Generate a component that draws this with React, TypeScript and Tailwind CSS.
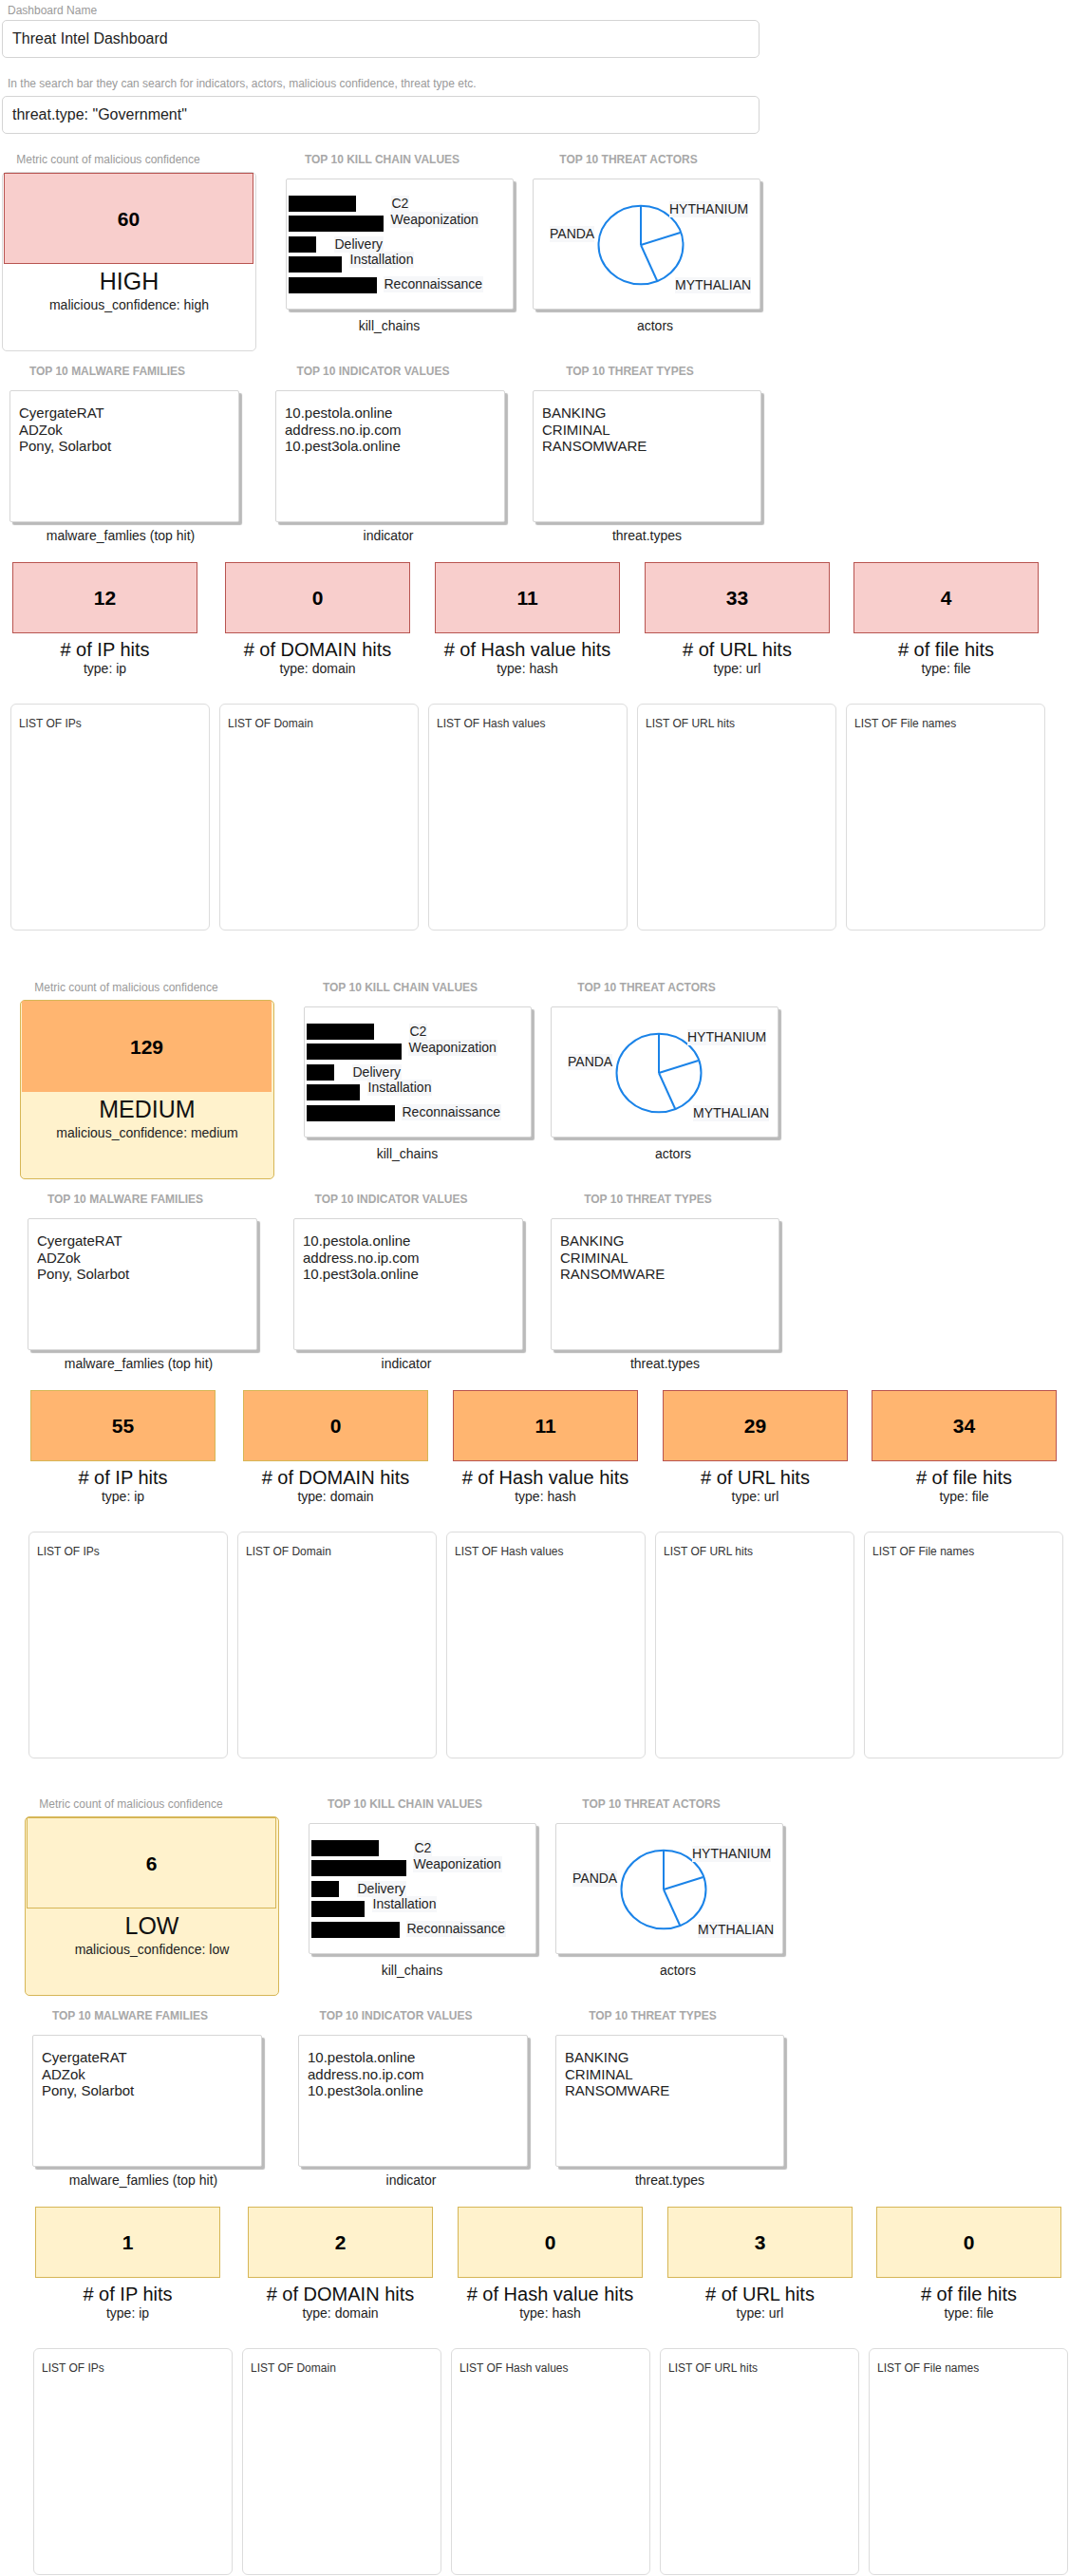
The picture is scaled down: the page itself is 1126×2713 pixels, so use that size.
import React from "react";

type CountItem = { v: string; cls: string };

interface SectionCfg {
  offset: string;
  mt: string;
  card: string;
  inner: string;
  value: string;
  level: string;
  sub: string;
  counts: CountItem[];
}

const KILL = [
  { w: 71, label: "C2", cls: "ml-[37px]" },
  { w: 100, label: "Weaponization", cls: "ml-[7px] -translate-y-[4px]" },
  { w: 29, label: "Delivery", cls: "ml-[19px]" },
  { w: 56, label: "Installation", cls: "ml-[8px] -translate-y-[5px]" },
  { w: 93, label: "Reconnaissance", cls: "ml-[7px] -translate-y-[1px]" },
];

const COUNT_LABELS = [
  ["# of IP hits", "type: ip"],
  ["# of DOMAIN hits", "type: domain"],
  ["# of Hash value hits", "type: hash"],
  ["# of URL hits", "type: url"],
  ["# of file hits", "type: file"],
];
const COUNT_ML = ["ml-[13px]", "ml-[29px]", "ml-[26px]", "ml-[26px]", "ml-[25px]"];
const LISTS = [
  "LIST OF IPs",
  "LIST OF Domain",
  "LIST OF Hash values",
  "LIST OF URL hits",
  "LIST OF File names",
];

const PINK = "bg-[#f8cecc] border-[#b85450]";
const ORANGE_Y = "bg-[#ffb570] border-[#d6b656]";
const ORANGE_R = "bg-[#ffb570] border-[#b85450]";
const YELLOW = "bg-[#fff2cc] border-[#d6b656]";

const SECTIONS: SectionCfg[] = [
  {
    offset: "pl-0",
    mt: "mt-[20px]",
    card: "border-[#d9d9d9] bg-white",
    inner: "bg-[#f8cecc] border-[#b85450]",
    value: "60",
    level: "HIGH",
    sub: "malicious_confidence: high",
    counts: [
      { v: "12", cls: PINK },
      { v: "0", cls: PINK },
      { v: "11", cls: PINK },
      { v: "33", cls: PINK },
      { v: "4", cls: PINK },
    ],
  },
  {
    offset: "pl-[19px]",
    mt: "mt-[53px]",
    card: "border-[#d6b656] bg-[#fff2cc]",
    inner: "bg-[#ffb570] border-[#ffb570]",
    value: "129",
    level: "MEDIUM",
    sub: "malicious_confidence: medium",
    counts: [
      { v: "55", cls: ORANGE_Y },
      { v: "0", cls: ORANGE_Y },
      { v: "11", cls: ORANGE_R },
      { v: "29", cls: ORANGE_R },
      { v: "34", cls: ORANGE_R },
    ],
  },
  {
    offset: "pl-[24px]",
    mt: "mt-[41px]",
    card: "border-[#d6b656] bg-[#fff2cc]",
    inner: "bg-[#fff2cc] border-[#d6b656]",
    value: "6",
    level: "LOW",
    sub: "malicious_confidence: low",
    counts: [
      { v: "1", cls: YELLOW },
      { v: "2", cls: YELLOW },
      { v: "0", cls: YELLOW },
      { v: "3", cls: YELLOW },
      { v: "0", cls: YELLOW },
    ],
  },
];

function Title({ children, pr = "pr-[36px]" }: { children: React.ReactNode; pr?: string }) {
  return (
    <div
      className={`h-[14px] whitespace-nowrap text-center text-[12px] font-bold leading-[14px] text-[#a8a8a8] ${pr}`}
    >
      {children}
    </div>
  );
}

const SHADOW_CARD =
  "border border-[#d6d6d6] bg-white rounded-[2px] shadow-[3px_3px_1px_rgba(0,0,0,0.27)]";

function KillChainCard() {
  return (
    <div className={`${SHADOW_CARD} h-[138px] w-[240px] pl-[1.5px] pt-[16.5px]`}>
      <div className="flex flex-col gap-[4.5px]">
        {KILL.map((k) => (
          <div key={k.label} className="flex h-[17px] items-center">
            <div className="h-[17px] bg-black" style={{ width: k.w }} />
            <span
              className={`whitespace-nowrap bg-[#f6f7f9] px-[1px] text-[14px] leading-[17px] text-[#222] ${k.cls}`}
            >
              {k.label}
            </span>
          </div>
        ))}
      </div>
    </div>
  );
}

function ActorsCard() {
  return (
    <div className={`${SHADOW_CARD} relative h-[138px] w-[240px]`}>
      <svg className="absolute left-0 top-0" width="238" height="136" viewBox="0 0 238 136">
        <ellipse cx="113" cy="69" rx="44.5" ry="41.3" fill="none" stroke="#1a83e8" strokeWidth="2" />
        <line x1="113" y1="69" x2="113" y2="27.7" stroke="#1a83e8" strokeWidth="2" />
        <line x1="113" y1="69" x2="154.5" y2="56" stroke="#1a83e8" strokeWidth="2" />
        <line x1="113" y1="69" x2="130.5" y2="107.5" stroke="#1a83e8" strokeWidth="2" />
      </svg>
      <span className="absolute left-[17px] top-[48.5px] bg-[#f6f7f9] text-[14px] leading-[17px] text-[#222]">
        PANDA
      </span>
      <span className="absolute left-[143px] top-[22.5px] bg-[#f6f7f9] text-[14px] leading-[17px] text-[#222]">
        HYTHANIUM
      </span>
      <span className="absolute left-[149px] top-[102.5px] bg-[#f6f7f9] text-[14px] leading-[17px] text-[#222]">
        MYTHALIAN
      </span>
    </div>
  );
}

function ListCard({ lines }: { lines: string[] }) {
  return (
    <div className={`${SHADOW_CARD} h-[139px] w-full pl-[9px] pt-[14px] text-[15px] leading-[17.5px] text-[#222]`}>
      {lines.map((l) => (
        <div key={l}>{l}</div>
      ))}
    </div>
  );
}

function Caption({ children, cls = "" }: { children: React.ReactNode; cls?: string }) {
  return (
    <div className={`whitespace-nowrap text-center text-[14px] leading-[17px] text-[#222] ${cls}`}>
      {children}
    </div>
  );
}

function Section({ cfg }: { cfg: SectionCfg }) {
  return (
    <div className={`${cfg.offset} ${cfg.mt}`}>
      {/* Row A */}
      <div className="flex h-[223px] items-start">
        <div className="ml-[2px] w-[268px]">
          <div className="h-[14px] whitespace-nowrap pr-[44px] text-center text-[12px] leading-[14px] text-[#9a9a9a]">
            Metric count of malicious confidence
          </div>
          <div className={`mt-[6px] h-[189px] rounded-[5px] border ${cfg.card}`}>
            <div
              className={`ml-[1px] mr-[2px] flex h-[96px] items-center justify-center border pt-[2px] text-[21px] font-bold text-black ${cfg.inner}`}
            >
              {cfg.value}
            </div>
            <div className="mt-[3.5px] text-center text-[25px] leading-[29px] text-[#111]">{cfg.level}</div>
            <div className="mt-[2.5px] text-center text-[14px] leading-[16px] text-[#222]">{cfg.sub}</div>
          </div>
        </div>
        <div className="ml-[31px] w-[240px]">
          <Title pr="pr-[37px]">TOP 10 KILL CHAIN VALUES</Title>
          <div className="mt-[13px]">
            <KillChainCard />
          </div>
          <Caption cls="mt-[8.5px] pr-[22px]">kill_chains</Caption>
        </div>
        <div className="ml-[20px] w-[240px]">
          <Title pr="pr-[38px]">TOP 10 THREAT ACTORS</Title>
          <div className="mt-[13px]">
            <ActorsCard />
          </div>
          <Caption cls="mt-[8.5px] pl-[18px]">actors</Caption>
        </div>
      </div>

      {/* Row B */}
      <div className="flex h-[208px] items-start">
        <div className="ml-[10px] w-[242px]">
          <Title>TOP 10 MALWARE FAMILIES</Title>
          <div className="mt-[13px]">
            <ListCard lines={["CyergateRAT", "ADZok", "Pony, Solarbot"]} />
          </div>
          <Caption cls="mt-[5.5px] pr-[8px]">malware_famlies (top hit)</Caption>
        </div>
        <div className="ml-[38px] w-[242px]">
          <Title>TOP 10 INDICATOR VALUES</Title>
          <div className="mt-[13px]">
            <ListCard lines={["10.pestola.online", "address.no.ip.com", "10.pest3ola.online"]} />
          </div>
          <Caption cls="mt-[5.5px] pr-[4px]">indicator</Caption>
        </div>
        <div className="ml-[29px] w-[241px]">
          <Title>TOP 10 THREAT TYPES</Title>
          <div className="mt-[13px]">
            <ListCard lines={["BANKING", "CRIMINAL", "RANSOMWARE"]} />
          </div>
          <Caption cls="mt-[5.5px]">threat.types</Caption>
        </div>
      </div>

      {/* Count row */}
      <div className="flex h-[149px] items-start">
        {cfg.counts.map((c, i) => (
          <div key={i} className={`${COUNT_ML[i]} w-[195px]`}>
            <div
              className={`flex h-[75px] items-center justify-center border text-[21px] font-bold text-black ${c.cls}`}
            >
              {c.v}
            </div>
            <div className="mt-[5.5px] whitespace-nowrap text-center text-[20px] leading-[23px] text-[#111]">
              {COUNT_LABELS[i][0]}
            </div>
            <div className="whitespace-nowrap text-center text-[14px] leading-[16px] text-[#222]">
              {COUNT_LABELS[i][1]}
            </div>
          </div>
        ))}
      </div>

      {/* List row */}
      <div className="flex gap-[10px] pl-[11px]">
        {LISTS.map((l) => (
          <div
            key={l}
            className="h-[239px] w-[210px] rounded-[6px] border border-[#dcdcdc] bg-white pl-[8px] pt-[13px] text-[12px] leading-[14px] text-[#333]"
          >
            {l}
          </div>
        ))}
      </div>
    </div>
  );
}

export default function App() {
  return (
    <div className="min-h-[2713px] w-[1126px] bg-white pt-[4px] font-['Liberation_Sans',Arial,sans-serif] text-[#222]">
      <div className="pl-[8px] text-[12px] leading-[14px] text-[#9a9a9a]">Dashboard Name</div>
      <div className="ml-[2px] mt-[3px] flex h-[40px] w-[798px] items-center rounded-[5px] border border-[#d4d4d4] pl-[10px] text-[16px] text-[#222]">
        Threat Intel Dashboard
      </div>
      <div className="mt-[20px] pl-[8px] text-[12px] leading-[14px] text-[#9a9a9a]">
        In the search bar they can search for indicators, actors, malicious confidence, threat type etc.
      </div>
      <div className="ml-[2px] mt-[6px] flex h-[40px] w-[798px] items-center rounded-[5px] border border-[#d4d4d4] pl-[10px] text-[16px] text-[#222]">
        threat.type: "Government"
      </div>
      {SECTIONS.map((s, i) => (
        <Section key={i} cfg={s} />
      ))}
    </div>
  );
}
